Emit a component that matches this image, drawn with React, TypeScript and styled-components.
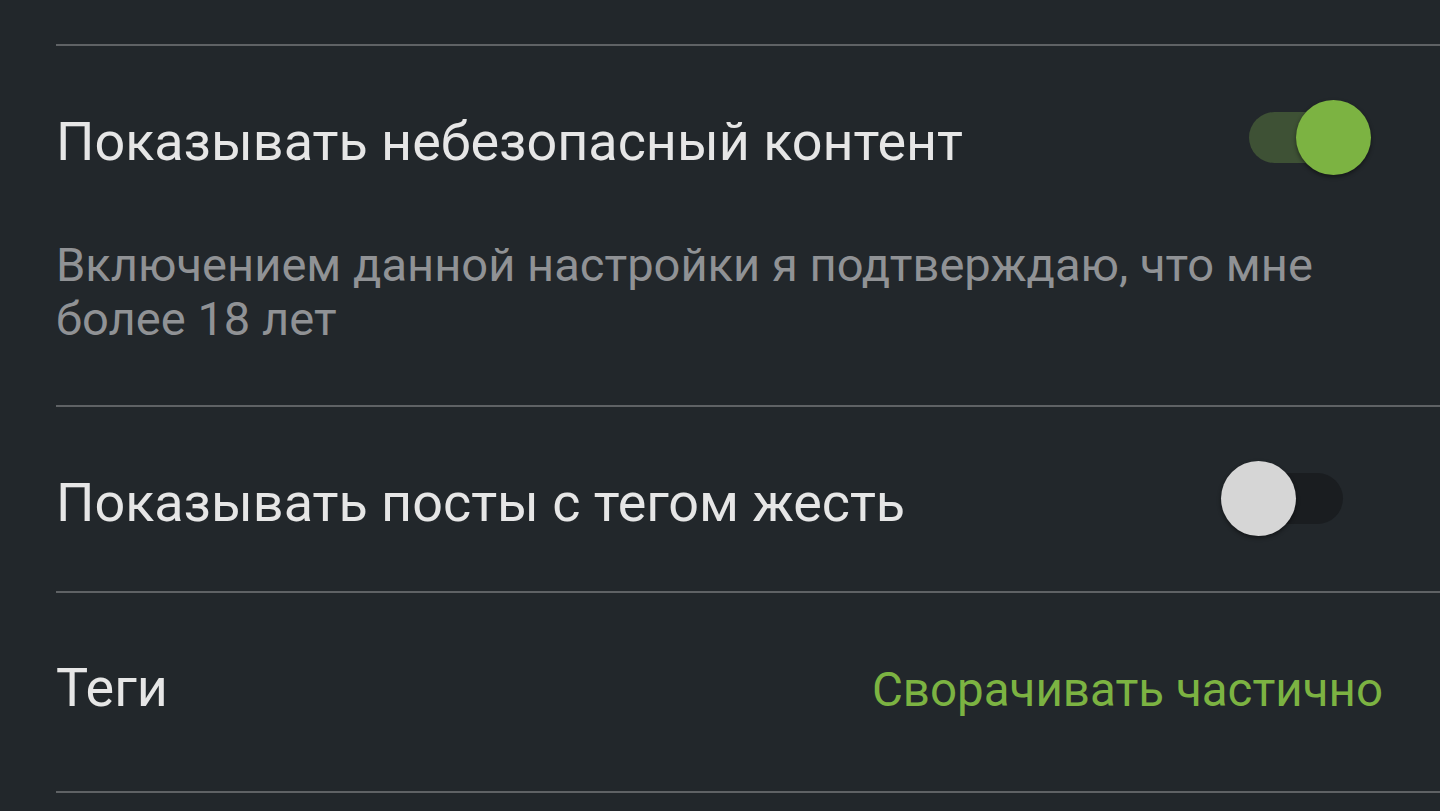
import React from "react";
import styled, { createGlobalStyle } from "styled-components";

const Global = createGlobalStyle`
  html, body { margin: 0; padding: 0; background: #22272b; }
  body { font-family: Roboto, "Noto Sans", sans-serif; -webkit-font-smoothing: antialiased; }
`;

const Page = styled.div`
  width: 1440px;
  height: 811px;
  overflow: hidden;
  background: #22272b;
  display: flex;
  flex-direction: column;
  & > * { flex-shrink: 0; }
`;

const TopSpace = styled.div`
  height: 44px;
`;

const Divider = styled.div`
  height: 2px;
  margin-left: 56px;
  background: #5f6265;
`;

const Item = styled.div<{ $top: number; $bottom: number }>`
  padding: ${(p) => p.$top}px 57px ${(p) => p.$bottom}px 56px;
  display: flex;
  flex-direction: column;
`;

const Line = styled.div<{ $align?: string }>`
  display: flex;
  justify-content: space-between;
  align-items: ${(p) => p.$align || "center"};
`;

const Title = styled.div`
  font-size: 53.9px;
  line-height: 64px;
  color: #e6e6e6;
`;

const Summary = styled.div`
  margin-top: 64px;
  font-size: 47.1px;
  line-height: 54px;
  color: #909295;
  max-width: 1280px;
`;

const Value = styled.div`
  font-size: 47.5px;
  line-height: 54px;
  color: #7cb342;
`;

const SwitchBox = styled.div`
  position: relative;
  width: 150px;
  height: 75px;
  margin: -10px 12px -1px 0;
  flex-shrink: 0;
`;

const Track = styled.div<{ $on: boolean }>`
  position: absolute;
  left: 28px;
  top: 12px;
  width: 94px;
  height: 51px;
  border-radius: 26px;
  background: ${(p) => (p.$on ? "#3e5135" : "#1a1d20")};
`;

const Thumb = styled.div<{ $on: boolean }>`
  position: absolute;
  top: 0;
  left: ${(p) => (p.$on ? "75px" : "0")};
  width: 75px;
  height: 75px;
  border-radius: 50%;
  background: ${(p) => (p.$on ? "#7cb342" : "#d6d6d6")};
  box-shadow: 0 2px 4px rgba(0, 0, 0, 0.45);
`;

const Switch = ({ on }: { on: boolean }) => (
  <SwitchBox>
    <Track $on={on} />
    <Thumb $on={on} />
  </SwitchBox>
);

export default function App() {
  return (
    <Page>
      <Global />
      <TopSpace />
      <Divider />
      <Item $top={64} $bottom={59}>
        <Line>
          <Title>Показывать небезопасный контент</Title>
          <Switch on={true} />
        </Line>
        <Summary>
          Включением данной настройки я подтверждаю, что мне более 18 лет
        </Summary>
      </Item>
      <Divider />
      <Item $top={64} $bottom={56}>
        <Line>
          <Title>Показывать посты с тегом жесть</Title>
          <Switch on={false} />
        </Line>
      </Item>
      <Divider />
      <Item $top={63} $bottom={71}>
        <Line $align="baseline">
          <Title>Теги</Title>
          <Value>Сворачивать частично</Value>
        </Line>
      </Item>
      <Divider />
    </Page>
  );
}
